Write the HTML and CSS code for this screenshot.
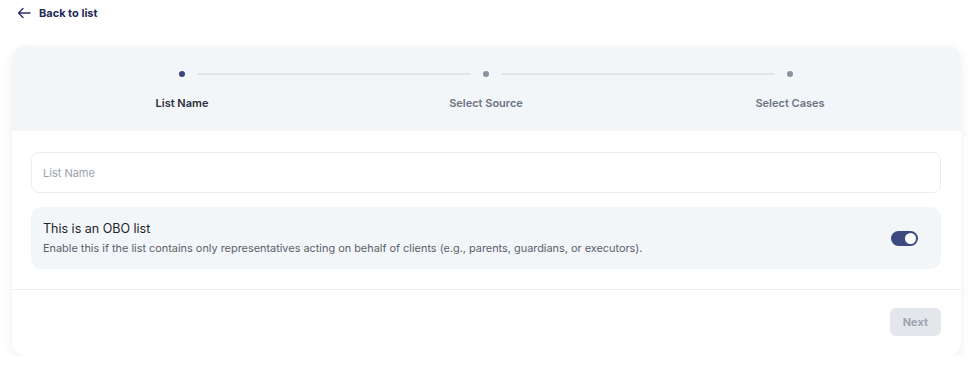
FILE: index.html
```html
<!DOCTYPE html>
<html lang="en">
  <head>
    <meta charset="UTF-8" />
    <meta name="viewport" content="width=device-width, initial-scale=1.0" />
    <title>New List</title>
    <link rel="stylesheet" href="styles.css">
  </head>
  <body>
    <div class="page">
      <a href="#" class="back">
        <svg width="14" height="12" viewBox="0 0 14 12" fill="none" stroke="#2b3563" stroke-width="1.4" stroke-linecap="round" stroke-linejoin="round">
          <path d="M13 6H1.5M6 1.5L1.5 6L6 10.5" />
        </svg>
        <span>Back to list</span>
      </a>

      <div class="card">
        <div class="steps">
          <div class="track">
            <span class="dot active"></span>
            <span class="line"></span>
            <span class="dot"></span>
            <span class="line"></span>
            <span class="dot"></span>
          </div>
          <div class="labels">
            <span class="label active">List Name</span>
            <span class="label">Select Source</span>
            <span class="label">Select Cases</span>
          </div>
        </div>

        <div class="body">
          <input type="text" class="field" placeholder="List Name" />

          <div class="obo">
            <div class="obo-text">
              <div class="obo-title">This is an OBO list</div>
              <div class="obo-desc">Enable this if the list contains only representatives acting on behalf of clients (e.g., parents, guardians, or executors).</div>
            </div>
            <span class="toggle on"><span class="knob"></span></span>
          </div>
        </div>

        <div class="footer">
          <button class="next" disabled>Next</button>
        </div>
      </div>
    </div>
  </body>
</html>
```

FILE: styles.css
```css
body {
  margin: 0;
  font-family: Inter, "Noto Sans", sans-serif;
  background-color: #ffffff;
  color: #1f2430;
}

.page {
  padding: 0 14px 0 12px;
}

.back {
  display: flex;
  align-items: center;
  gap: 8px;
  height: 26px;
  margin-left: 5px;
  text-decoration: none;
  color: #1e2a5a;
  font-size: 11px;
  font-weight: 700;
}

.card {
  margin-top: 20px;
  border-radius: 14px;
  background-color: #fff;
  box-shadow: 0 3px 12px rgba(20, 30, 60, 0.07);
  overflow: hidden;
}

.steps {
  background-color: #f3f6f9;
  height: 85px;
  padding: 0 19px 0 18px;
}

.track {
  display: flex;
  align-items: center;
  padding: 25px 149px 0;
}

.dot {
  width: 6px;
  height: 6px;
  border-radius: 50%;
  background-color: #8a93a2;
  flex-shrink: 0;
}

.dot.active {
  background-color: #3b4681;
}

.line {
  flex: 1;
  height: 2px;
  margin: 0 12px;
  background-color: #e1e5ea;
}

.labels {
  display: grid;
  grid-template-columns: repeat(3, 1fr);
  margin-top: 19px;
}

.label {
  text-align: center;
  font-size: 11px;
  font-weight: 600;
  color: #6c7482;
}

.label.active {
  color: #2b303b;
}

.body {
  padding: 21px 20px 20px 19px;
  border-bottom: 1px solid #eef0f3;
}

.field {
  display: block;
  width: 100%;
  height: 41px;
  box-sizing: border-box;
  border: 1px solid #eaedf0;
  border-radius: 8px;
  padding: 0 11px;
  font-family: inherit;
  font-size: 11px;
  outline: none;
}

.field::placeholder {
  color: #9aa2ad;
}

.obo {
  display: flex;
  align-items: center;
  margin-top: 14px;
  height: 62px;
  padding: 0 23px 0 12px;
  background-color: #f3f6f9;
  border-radius: 10px;
}

.obo-text {
  flex: 1;
}

.obo-title {
  font-size: 12.5px;
  color: #20242c;
}

.obo-desc {
  margin-top: 5px;
  font-size: 10.9px;
  color: #5b616b;
}

.toggle {
  width: 27px;
  height: 15px;
  border-radius: 8px;
  background-color: #3d4a80;
  display: flex;
  align-items: center;
  justify-content: flex-end;
  padding: 0 2px;
  box-sizing: border-box;
}

.knob {
  width: 11px;
  height: 11px;
  border-radius: 50%;
  background-color: #fff;
}

.footer {
  display: flex;
  justify-content: flex-end;
  padding: 18px 20px 20px;
}

.next {
  height: 28px;
  padding: 0 13px;
  border: none;
  border-radius: 6px;
  background-color: #e3e7eb;
  color: #9ea5b0;
  font-family: inherit;
  font-size: 11px;
  font-weight: 700;
}
```
